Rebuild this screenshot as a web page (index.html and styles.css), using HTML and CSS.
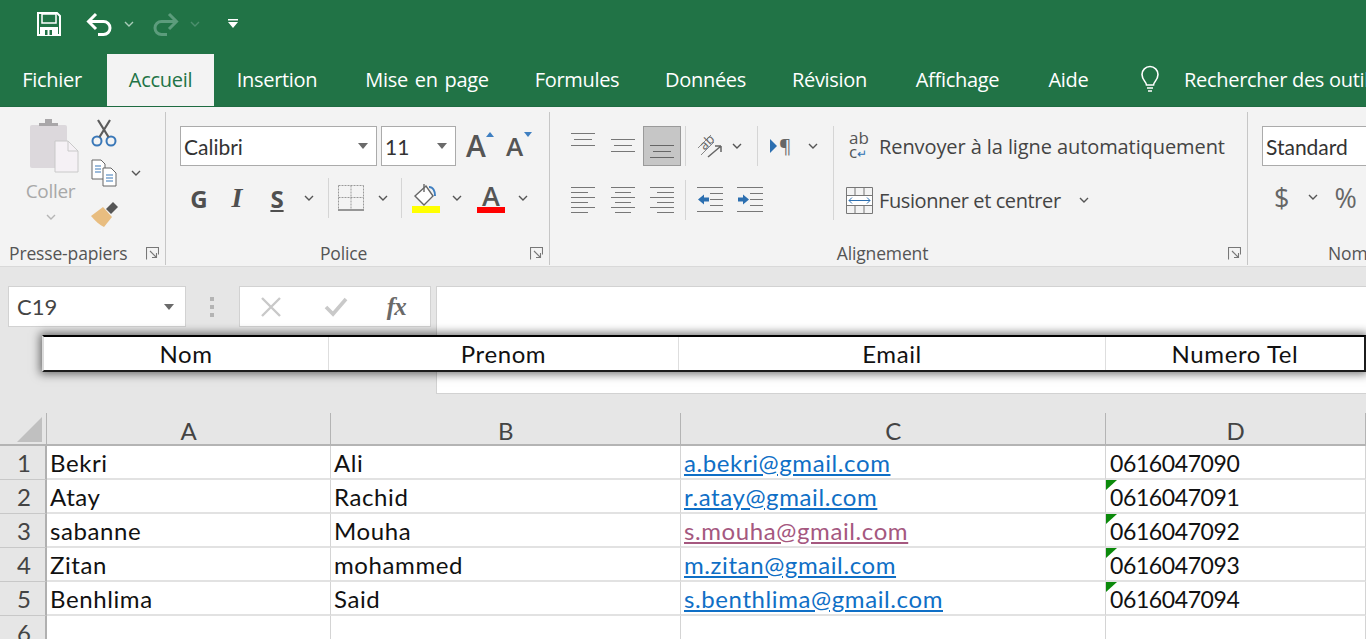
FILE: index.html
```html
<!DOCTYPE html>
<html lang="fr">
<head>
<meta charset="utf-8">
<title>Excel</title>
<link rel="stylesheet" href="styles.css">
</head>
<body>
<svg class="defs" aria-hidden="true">
  <symbol id="chev" viewBox="0 0 10 6"><path d="M1 1l4 4 4-4" fill="none" stroke="currentColor" stroke-width="1.4"/></symbol>
  <symbol id="launch" viewBox="0 0 13 13"><path d="M.5 12.5V.5h12v7M4 4l6 6M6 10.500h4.500V6" fill="none" stroke="#777" stroke-width="1.100"/></symbol>
  <symbol id="drop" viewBox="0 0 10 6"><path d="M0 0h10L5 6z" fill="#6a6a6a"/></symbol>
</svg>

<header class="qat">
  <svg class="i-save" viewBox="0 0 24 24"><path d="M1 1h19l3 3v19H1z" fill="none" stroke="#fff" stroke-width="2"/><path d="M5 2h14v9H5z" fill="none" stroke="#fff" stroke-width="1.500"/><path d="M3 15h18v8H3z" fill="#fff"/><path d="M8 18h2.500v5H8zM12.500 18H15v5h-2.500z" fill="#217346"/></svg>
  <svg class="i-undo" viewBox="0 0 26 24"><path d="M10 2L2.500 9.500 10 17M3 9.500h14.500a6.500 6.500 0 0 1 0 13H12" fill="none" stroke="#fff" stroke-width="3"/></svg>
  <svg class="i-chev c-lite" viewBox="0 0 10 6"><use href="#chev"/></svg>
  <svg class="i-redo" viewBox="0 0 26 24"><path d="M16 2l7.500 7.500L16 17M23 9.500H8.500a6.500 6.500 0 0 0 0 13H14" fill="none" stroke="#5c9c7c" stroke-width="3"/></svg>
  <svg class="i-chev c-dim" viewBox="0 0 10 6"><use href="#chev"/></svg>
  <svg class="i-custom" viewBox="0 0 10 9"><path d="M0 0h10v1.500H0zM0 3h10L5 9z" fill="#fff"/></svg>
</header>

<nav class="tabs">
  <span class="tab t-file">Fichier</span>
  <span class="tab t-active">Accueil</span>
  <span class="tab t-ins">Insertion</span>
  <span class="tab t-page">Mise en page</span>
  <span class="tab t-form">Formules</span>
  <span class="tab t-data">Données</span>
  <span class="tab t-rev">Révision</span>
  <span class="tab t-aff">Affichage</span>
  <span class="tab t-aide">Aide</span>
  <svg class="i-bulb" viewBox="0 0 22 28"><path d="M7.500 20c0-3-4.500-5-4.500-10.500a8 8 0 0 1 16 0C19 15 14.500 17 14.500 20zM8 23h6M9 26h4" fill="none" stroke="#fff" stroke-width="1.600"/></svg>
  <span class="search">Rechercher des outils</span>
</nav>

<section class="ribbon">
  <div class="group g-clip">
    <div class="g-body clip">
      <div class="paste">
        <svg class="i-paste" viewBox="0 0 50 54"><rect x="1" y="6" width="37" height="43" rx="2" fill="#dcd8dc"/><path d="M10 7V4h6V0h7v4h6v3z" fill="#a9a7a9"/><path d="M26 22h13l10 10v21H26z" fill="#f5f1f5" stroke="#c9c9c9"/><path d="M39 22v10h10" fill="none" stroke="#c9c9c9"/></svg>
        <span class="coller">Coller</span>
        <svg class="i-chev c-pale" viewBox="0 0 10 6"><use href="#chev"/></svg>
      </div>
      <div class="clip-tools">
        <svg class="i-scis" viewBox="0 0 26 28"><circle cx="6" cy="22" r="4.500" fill="none" stroke="#3a78b8" stroke-width="2"/><circle cx="20" cy="22" r="4.500" fill="none" stroke="#3a78b8" stroke-width="2"/><path d="M8.500 18L19 1M17.500 18L7 1" stroke="#5c5c5c" stroke-width="2.200"/></svg>
        <div class="copy-row">
          <svg class="i-copy" viewBox="0 0 26 28"><path d="M1 1h9l4 4v15H1z" fill="#fff" stroke="#666"/><path d="M12 9h8l5 5v13H12z" fill="#fff" stroke="#666"/><path d="M4 7h6M4 10h6M4 13h6M15 16h7M15 19h7M15 22h7" stroke="#3a78b8" stroke-width="1.200"/></svg>
          <svg class="i-chev c-dark" viewBox="0 0 10 6"><use href="#chev"/></svg>
        </div>
        <svg class="i-brush" viewBox="0 0 28 26"><path d="M0 15L12 6l9 10-8 10C9 24 4 20 0 15z" fill="#e8bd80"/><path d="M15 8l7-7 5 5-7 7z" fill="#555"/></svg>
      </div>
    </div>
    <div class="g-label lab-clip"><span>Presse-papiers</span><svg class="i-launch"><use href="#launch"/></svg></div>
  </div>

  <div class="group g-font">
    <div class="g-body font-body">
      <div class="font-top">
        <div class="combo c-family"><span>Calibri</span><svg class="i-drop"><use href="#drop"/></svg></div>
        <div class="combo c-size"><span>11</span><svg class="i-drop"><use href="#drop"/></svg></div>
        <span class="grow a-up">A<svg class="tri" viewBox="0 0 8 5"><path d="M4 0l4 5H0z" fill="#3f7fc1"/></svg></span>
        <span class="grow a-down">A<svg class="tri" viewBox="0 0 8 5"><path d="M0 0h8L4 5z" fill="#3f7fc1"/></svg></span>
      </div>
      <div class="font-row">
        <span class="btn fmt">G</span>
        <span class="btn fmt it">I</span>
        <span class="btn fmt un">S</span>
        <span class="btn"><svg class="i-chev c-dark" viewBox="0 0 10 6"><use href="#chev"/></svg></span>
        <i class="vsep"></i>
        <span class="btn"><svg class="i-border" viewBox="0 0 26 26"><path d="M.5.500h25M.5 12.500h25M.5.500v24M13 .500v24M25.500.500v24" fill="none" stroke="#999" stroke-dasharray="2 1"/><path d="M0 25h26" stroke="#777" stroke-width="1.500"/></svg></span>
        <span class="btn"><svg class="i-chev c-dark" viewBox="0 0 10 6"><use href="#chev"/></svg></span>
        <i class="vsep"></i>
        <span class="btn"><svg class="i-fill" viewBox="0 0 28 30"><path d="M14 3L3 13l9 9 9-9z" fill="#fff" stroke="#666" stroke-width="1.400"/><path d="M12 1v8" stroke="#666" stroke-width="1.400"/><path d="M17 4c4 0 6 4 6 9" fill="none" stroke="#3f7fc1" stroke-width="2"/><path d="M0 23h28v7H0z" fill="#ffff00"/></svg></span>
        <span class="btn"><svg class="i-chev c-dark" viewBox="0 0 10 6"><use href="#chev"/></svg></span>
        <span class="btn"><span class="a-color">A</span></span>
        <span class="btn"><svg class="i-chev c-dark" viewBox="0 0 10 6"><use href="#chev"/></svg></span>
      </div>
    </div>
    <div class="g-label lab-center lab-pol"><span>Police</span><svg class="i-launch"><use href="#launch"/></svg></div>
  </div>

  <div class="group g-align">
    <div class="g-body align-body">
      <div class="align-row top">
        <span class="btn"><svg class="i-al" viewBox="0 0 26 26"><path d="M1 .500h24M4 6.500h18M1 12.500h24" stroke="#777"/></svg></span>
        <span class="btn"><svg class="i-al" viewBox="0 0 26 26"><path d="M1 6.500h24M4 12.500h18M1 18.500h24" stroke="#777"/></svg></span>
        <span class="btn sel"><svg class="i-al" viewBox="0 0 26 26"><path d="M1 12.500h24M4 18.500h18M1 24.500h24" stroke="#666"/></svg></span>
        <i class="vsep"></i>
        <span class="btn"><svg class="i-orient" viewBox="0 0 28 26"><path d="M2 15L15 2M5 22L18 9" stroke="#888"/><text x="5" y="15" class="svg-ab" transform="rotate(-45 10 12)">ab</text><path d="M12 24L25 13M25 13h-6M25 13v6" fill="none" stroke="#666" stroke-width="1.500"/></svg></span>
        <span class="btn"><svg class="i-chev c-dark" viewBox="0 0 10 6"><use href="#chev"/></svg></span>
        <i class="vsep"></i>
        <span class="btn pil"><svg class="tri-r" viewBox="0 0 7 14"><path d="M0 0l7 7-7 7z" fill="#2c6fb0"/></svg>¶</span>
        <span class="btn"><svg class="i-chev c-dark" viewBox="0 0 10 6"><use href="#chev"/></svg></span>
        <i class="vsep"></i>
        <span class="wide wrap"><span class="abc"><span>ab</span><span>c<b>↵</b></span></span><span class="w-text">Renvoyer à la ligne automatiquement</span></span>
      </div>
      <div class="align-row bot">
        <span class="btn"><svg class="i-al" viewBox="0 0 26 26"><path d="M1 .500h24M1 5.500h17M1 10.500h24M1 15.500h17M1 20.500h24M1 25.500h17" stroke="#777"/></svg></span>
        <span class="btn"><svg class="i-al" viewBox="0 0 26 26"><path d="M1 .500h24M5 5.500h16M1 10.500h24M5 15.500h16M1 20.500h24M5 25.500h16" stroke="#777"/></svg></span>
        <span class="btn"><svg class="i-al" viewBox="0 0 26 26"><path d="M1 .500h24M8 5.500h17M1 10.500h24M8 15.500h17M1 20.500h24M8 25.500h17" stroke="#777"/></svg></span>
        <i class="vsep"></i>
        <span class="btn"><svg class="i-al" viewBox="0 0 26 26"><path d="M0 .500h26M13 6.500h13M13 12.500h13M13 18.500h13M0 24.500h26" stroke="#777"/><path d="M1 12.500l6-5v3h5v4H7v3z" fill="#2c6fb0"/></svg></span>
        <span class="btn"><svg class="i-al" viewBox="0 0 26 26"><path d="M0 .500h26M13 6.500h13M13 12.500h13M13 18.500h13M0 24.500h26" stroke="#777"/><path d="M12 12.500l-6-5v3H1v4h5v3z" fill="#2c6fb0"/></svg></span>
        <i class="gap-fill"></i>
        <i class="vsep tall"></i>
        <span class="wide merge"><svg class="i-merge" viewBox="0 0 27 27"><path d="M.5.500h26v26H.5zM.5 8.500h26M.5 18.500h26M9 .500v8M18 .500v8M9 18.500v8M18 18.500v8" fill="none" stroke="#777"/><path d="M1 9h25v9H1z" fill="#fff"/><path d="M3 13.500h21M3 13.500l3-3M3 13.500l3 3M24 13.500l-3-3M24 13.500l-3 3" stroke="#2c6fb0" fill="none"/></svg><span class="w-text">Fusionner et centrer</span><svg class="i-chev c-dark m-chev" viewBox="0 0 10 6"><use href="#chev"/></svg></span>
      </div>
    </div>
    <div class="g-label lab-center lab-al"><span>Alignement</span><svg class="i-launch"><use href="#launch"/></svg></div>
  </div>

  <div class="group g-num">
    <div class="g-body num-body">
      <div class="combo c-num"><span>Standard</span></div>
      <div class="num-row">
        <span class="sym">$</span>
        <svg class="i-chev c-dark" viewBox="0 0 10 6"><use href="#chev"/></svg>
        <span class="sym pct">%</span>
      </div>
    </div>
    <div class="g-label lab-num"><span>Nombre</span></div>
  </div>
</section>

<section class="fbar">
  <div class="namebox"><span>C19</span><svg class="i-drop"><use href="#drop"/></svg></div>
  <div class="dots"><i></i><i></i><i></i></div>
  <div class="fxbox">
    <svg class="i-x" viewBox="0 0 22 20"><path d="M2 1l18 18M20 1L2 19" stroke="#c9c9c9" stroke-width="2.400"/></svg>
    <svg class="i-ok" viewBox="0 0 24 20"><path d="M2 10l7 7L22 2" fill="none" stroke="#c9c9c9" stroke-width="3.600"/></svg>
    <span class="fx">fx</span>
  </div>
  <div class="finput"></div>
</section>

<div class="float-head">
  <span class="fh-a">Nom</span><span class="fh-b">Prenom</span><span class="fh-c">Email</span><span class="fh-d">Numero Tel</span>
</div>

<main class="sheet">
  <div class="corner"><svg class="i-corner" viewBox="0 0 25 25"><path d="M25 0v25H0z" fill="#c0c0c0"/></svg></div>
  <div class="ch">A</div><div class="ch">B</div><div class="ch">C</div><div class="ch">D</div>

  <div class="rh">1</div><div class="cell">Bekri</div><div class="cell">Ali</div><div class="cell"><a class="lnk">a.bekri@gmail.com</a></div><div class="cell num">0616047090</div>
  <div class="rh">2</div><div class="cell">Atay</div><div class="cell">Rachid</div><div class="cell"><a class="lnk">r.atay@gmail.com</a></div><div class="cell num flag">0616047091</div>
  <div class="rh">3</div><div class="cell">sabanne</div><div class="cell">Mouha</div><div class="cell"><a class="lnk seen">s.mouha@gmail.com</a></div><div class="cell num flag">0616047092</div>
  <div class="rh">4</div><div class="cell">Zitan</div><div class="cell">mohammed</div><div class="cell"><a class="lnk">m.zitan@gmail.com</a></div><div class="cell num flag">0616047093</div>
  <div class="rh">5</div><div class="cell">Benhlima</div><div class="cell">Said</div><div class="cell"><a class="lnk">s.benthlima@gmail.com</a></div><div class="cell num flag">0616047094</div>
  <div class="rh">6</div><div class="cell"></div><div class="cell"></div><div class="cell"></div><div class="cell"></div>
</main>
</body>
</html>
```

FILE: styles.css
```css
* { box-sizing: border-box; }
html, body { margin: 0; padding: 0; }
body {
  position: relative;
  width: 1366px;
  height: 639px;
  overflow: hidden;
  background: #fff;
  font-family: "Open Sans", "Noto Sans", sans-serif;
  color: #444;
}
.defs { position: absolute; width: 0; height: 0; }
svg { display: block; flex: none; }
i { display: block; }

.i-chev { width: 10px; height: 6px; }
.c-lite { color: #a9cdb9; }
.c-dim { color: #4d8f6e; }
.c-pale { color: #b5b5b5; }
.c-dark { color: #555; }

.qat { height: 54px; background: #217346; display: flex; align-items: center; padding: 0 0 7px 37px; }
.i-save { width: 24px; height: 24px; margin-right: 25px; }
.i-undo { width: 26px; height: 24px; margin-right: 12px; }
.i-redo { width: 26px; height: 24px; margin: 0 11px 0 19px; }
.i-custom { width: 10px; height: 9px; margin-left: 28px; }

.tabs { height: 53px; background: #217346; display: flex; align-items: center; color: #fff; font-size: 20px; white-space: nowrap; border-bottom: 1px solid #1e6b41; overflow: hidden; }
.tab { flex: none; height: 53px; display: flex; align-items: center; justify-content: center; letter-spacing: -.3px; padding-bottom: 2px; }
.t-file { width: 107px; padding-right: 3px; }
.t-active { width: 107px; background: #f3f3f3; color: #217346; }
.t-ins { width: 128px; padding-right: 2px; }
.t-page { width: 170px; word-spacing: 2px; }
.t-form { width: 130px; }
.t-data { width: 127px; }
.t-rev { width: 121px; }
.t-aff { width: 135px; }
.t-aide { width: 87px; }
.i-bulb { width: 22px; height: 28px; margin: 0 23px 2px 27px; }
.search { flex: none; letter-spacing: -.3px; padding-bottom: 2px; }

.ribbon { height: 160px; background: #f3f3f3; display: flex; border-bottom: 1px solid #d9d9d9; font-size: 16px; }
.group { display: flex; flex-direction: column; height: 153px; margin-top: 5px; border-right: 1px solid #c6c6c6; }
.g-body { height: 130px; }
.g-label { display: flex; align-items: center; height: 22px; font-size: 17.5px; color: #555; letter-spacing: -.15px; white-space: nowrap; }
.i-launch { width: 13px; height: 13px; }
.g-clip { width: 166px; }
.g-font { width: 384px; }
.g-align { width: 698px; }
.g-num { width: 118px; border-right: 0; }

.clip { display: flex; padding: 7px 0 0 23px; }
.paste { width: 55px; display: flex; flex-direction: column; align-items: center; }
.i-paste { width: 50px; height: 54px; align-self: flex-start; margin-left: 6px; }
.coller { font-size: 19px; color: #a8a8a8; letter-spacing: -.3px; line-height: 26px; margin-top: 5px; }
.paste .i-chev { margin-top: 10px; }
.clip-tools { margin-left: 13px; display: flex; flex-direction: column; }
.i-scis { width: 26px; height: 28px; }
.copy-row { display: flex; align-items: center; margin-top: 12px; }
.i-copy { width: 26px; height: 28px; margin-right: 14px; }
.i-brush { width: 28px; height: 26px; margin-top: 14px; }
.lab-clip { padding-left: 9px; }
.lab-clip .i-launch { margin-left: 19px; }
.lab-center { position: relative; justify-content: center; }
.lab-center .i-launch { position: absolute; right: 6px; top: 5px; }
.lab-pol { padding-right: 28px; }
.lab-al { padding-right: 32px; }
.lab-num { padding-left: 80px; }

.font-body { padding: 14px 0 0 14px; }
.font-top { display: flex; align-items: center; height: 40px; }
.combo { display: flex; align-items: center; height: 40px; background: #fff; border: 1px solid #ababab; font-family: Lato, "Noto Sans", sans-serif; font-size: 21px; padding-left: 3px; color: #333; }
.c-family { width: 197px; }
.c-size { width: 75px; margin-left: 4px; }
.i-drop { width: 10px; height: 6px; margin-left: auto; margin-right: 8px; }
.grow { position: relative; font-weight: 600; color: #555; font-size: 30px; line-height: 40px; letter-spacing: 0; }
.a-up { margin-left: 10px; width: 24px; }
.a-down { margin-left: 16px; font-size: 26px; width: 22px; }
.tri { position: absolute; width: 8px; height: 5px; top: 6px; right: -4px; }
.font-row { display: grid; grid-template-columns: 38px 38px 42px 22px 16px 30px 34px 2px 48px 14px 54px 10px; align-items: center; margin-top: 12px; height: 36px; }
.btn { display: flex; align-items: center; justify-content: center; height: 36px; }
.fmt { font-size: 24px; font-weight: 700; color: #4f4f4f; }
.it { font-family: "Liberation Serif", serif; font-style: italic; font-size: 28px; }
.un { text-decoration: underline; }
.vsep { width: 1px; height: 40px; background: #d5d5d5; justify-self: center; }
.tall { height: 60px; margin-top: -20px; }
.i-border { width: 26px; height: 26px; }
.i-fill { width: 28px; height: 30px; }
.a-color { display: block; width: 28px; height: 30px; border-bottom: 6px solid #f00; font-size: 27px; line-height: 26px; text-align: center; font-weight: 600; color: #555; }

.align-body { padding: 14px 0 0 13px; }
.align-row { display: grid; align-items: center; height: 40px; }
.top { grid-template-columns: 40px 40px 38px 9px 40px 14px 26px 32px 22px 18px auto; }
.bot { grid-template-columns: 40px 40px 38px 9px 40px 40px 54px 18px auto; margin-top: 14px; }
.sel { height: 40px; background: #c6c6c6; border: 1px solid #9a9a9a; }
.i-al { width: 26px; height: 26px; }
.i-orient { width: 28px; height: 26px; overflow: visible; }
.svg-ab { font-size: 13px; fill: #666; font-family: "Open Sans", sans-serif; }
.pil { font-size: 19px; color: #666; gap: 2px; justify-content: flex-start; }
.tri-r { width: 7px; height: 14px; }
.wide { display: flex; align-items: center; height: 40px; white-space: nowrap; font-size: 20px; color: #444; }
.wrap { letter-spacing: -.09px; }
.merge { letter-spacing: -.4px; padding-left: 4px; }
.abc { display: flex; flex-direction: column; width: 37px; padding-left: 7px; font-size: 17px; line-height: 14px; color: #555; letter-spacing: 0; }
.abc b { color: #2c6fb0; font-weight: 400; font-size: 12px; }
.i-merge { width: 27px; height: 27px; margin-right: 6px; }
.m-chev { margin-left: 18px; }

.num-body { padding: 14px 0 0 14px; }
.c-num { width: 130px; }
.num-row { display: flex; align-items: center; margin-top: 13px; height: 36px; padding-left: 12px; }
.sym { font-size: 27px; color: #666; font-weight: 400; }
.num-row .i-chev { margin: 0 0 0 19px; }
.pct { margin-left: 16px; }

.fbar { height: 146px; background: #e6e6e6; display: flex; align-items: flex-start; padding: 19px 0 0 8px; }
.namebox { width: 178px; height: 41px; background: #fff; border: 1px solid #d2d2d2; display: flex; align-items: center; padding-left: 8px; font-family: Lato, sans-serif; font-size: 22px; color: #444; }
.namebox .i-drop { margin-right: 11px; }
.dots { width: 53px; height: 41px; display: flex; flex-direction: column; align-items: center; justify-content: center; gap: 4px; }
.dots i { width: 4px; height: 4px; background: #b4b4b4; }
.fxbox { width: 192px; height: 41px; background: #fff; border: 1px solid #d2d2d2; display: flex; align-items: center; padding-left: 20px; }
.i-x { width: 22px; height: 20px; margin-right: 42px; }
.i-ok { width: 24px; height: 20px; margin-right: 39px; }
.fx { font-family: "Liberation Serif", serif; font-style: italic; font-weight: 700; font-size: 25px; color: #6a6a6a; letter-spacing: -1px; line-height: 1; }
.finput { width: 931px; height: 108px; margin-left: 5px; background: #fff; border: 1px solid #d2d2d2; border-right: 0; }

.float-head {
  position: absolute;
  left: 42px;
  top: 335px;
  width: 1324px;
  height: 37px;
  display: grid;
  grid-template-columns: 285px 350px 427px 1fr;
  background: #fff;
  border-top: 2px solid #000;
  border-bottom: 2px solid #1c1c1c;
  border-right: 2px solid #1c1c1c;
  border-left: 2px solid #dcdcdc;
  box-shadow: 0 0 9px 2px rgba(0, 0, 0, .55);
  font-family: Lato, sans-serif;
  font-size: 24px;
  color: #111;
  letter-spacing: .6px;
}
.float-head span { display: flex; align-items: center; justify-content: center; border-right: 1px solid #dedede; }
.float-head .fh-d { border-right: 0; }

.sheet { display: grid; grid-template-columns: 47px 284px 350px 425px 260px; grid-template-rows: 33px repeat(6, 34px); font-family: Lato, sans-serif; font-size: 24px; color: #111; letter-spacing: .6px; }
.corner, .ch { background: #e6e6e6; border-bottom: 2px solid #b4b4b4; border-right: 1px solid #b4b4b4; }
.corner { display: flex; align-items: flex-end; justify-content: flex-end; padding: 0 4px 2px 0; }
.i-corner { width: 25px; height: 25px; }
.ch { display: flex; align-items: center; justify-content: center; color: #444; padding: 3px 0 0 1px; }
.rh { background: #e6e6e6; border-right: 2px solid #b0b0b0; border-bottom: 1px solid #c8c8c8; display: flex; align-items: center; justify-content: center; color: #444; padding-left: 3px; letter-spacing: 0; }
.cell { position: relative; border-right: 1px solid #d4d4d4; border-bottom: 2px solid #e2e2e2; padding: 0 0 0 3px; display: flex; align-items: center; white-space: nowrap; }
.num { font-size: 23px; letter-spacing: -.4px; padding: 1px 0 0 4px; }
.lnk { color: #0f6fc6; text-decoration: underline; }
.seen { color: #a5587f; }
.flag::before { content: ""; position: absolute; left: 0; top: 0; border-top: 10px solid #0b8a0b; border-right: 11px solid transparent; }
```
